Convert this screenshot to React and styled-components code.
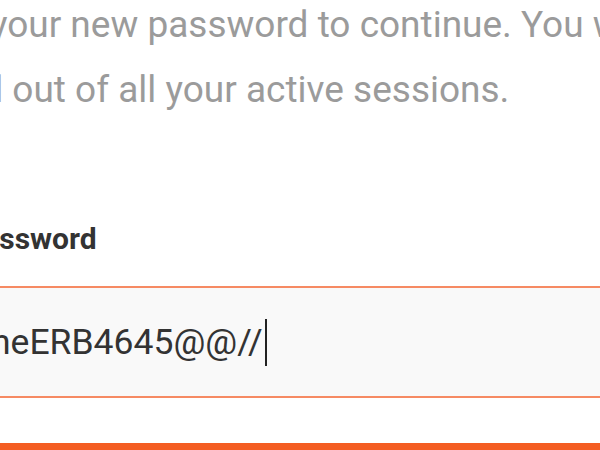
import React from "react";
import styled, { createGlobalStyle } from "styled-components";

const GlobalStyle = createGlobalStyle`
    html, body {
        margin: 0;
        padding: 0;
        background: #ffffff;
    }
    body {
        font-family: Roboto, "Liberation Sans", Arial, sans-serif;
    }
`;

const ResetPasswordPage = () => {
    return (
        <S.Viewport>
            <GlobalStyle />
            <S.Column>
                <S.Description>
                    <S.Line>Enter your new password to continue. You will be</S.Line>
                    <S.Line $shift={-4}>logged out of all your active sessions.</S.Line>
                </S.Description>
                <S.Label>Password</S.Label>
                <S.Field>
                    <S.Value>neERB4645@@//</S.Value>
                    <S.Caret />
                </S.Field>
                <S.Button>Reset password</S.Button>
            </S.Column>
        </S.Viewport>
    );
};

export default ResetPasswordPage;

const Viewport = styled.div`
    width: 600px;
    height: 450px;
    overflow: hidden;
    background: #ffffff;
`;

const Column = styled.div`
    display: flex;
    flex-direction: column;
    width: 820px;
    margin-left: -34px;
`;

const Description = styled.div`
    margin-top: -8px;
    margin-left: -71px;
    font-size: 37px;
    line-height: 65px;
    color: #9b9b9b;
`;

const Line = styled.div`
    white-space: nowrap;
    margin-left: ${(p) => p.$shift || 0}px;
`;

const Label = styled.label`
    margin-top: 99px;
    margin-left: -2px;
    font-size: 30px;
    font-weight: 700;
    color: #333333;
`;

const Field = styled.div`
    margin-top: 30px;
    height: 112px;
    box-sizing: border-box;
    display: flex;
    align-items: center;
    padding-left: 23px;
    border: 2px solid #f68a63;
    background: #f9f9f9;
`;

const Value = styled.span`
    font-size: 35.5px;
    color: #333333;
    white-space: nowrap;
`;

const Caret = styled.span`
    width: 2px;
    height: 47px;
    margin-left: 2px;
    background: #222222;
`;

const Button = styled.button`
    margin-top: 45px;
    height: 110px;
    border: none;
    background: #f45d22;
    color: #ffffff;
    font-family: inherit;
    font-size: 32px;
    font-weight: 700;
`;

const S = {
    Viewport,
    Column,
    Description,
    Line,
    Label,
    Field,
    Value,
    Caret,
    Button
};
